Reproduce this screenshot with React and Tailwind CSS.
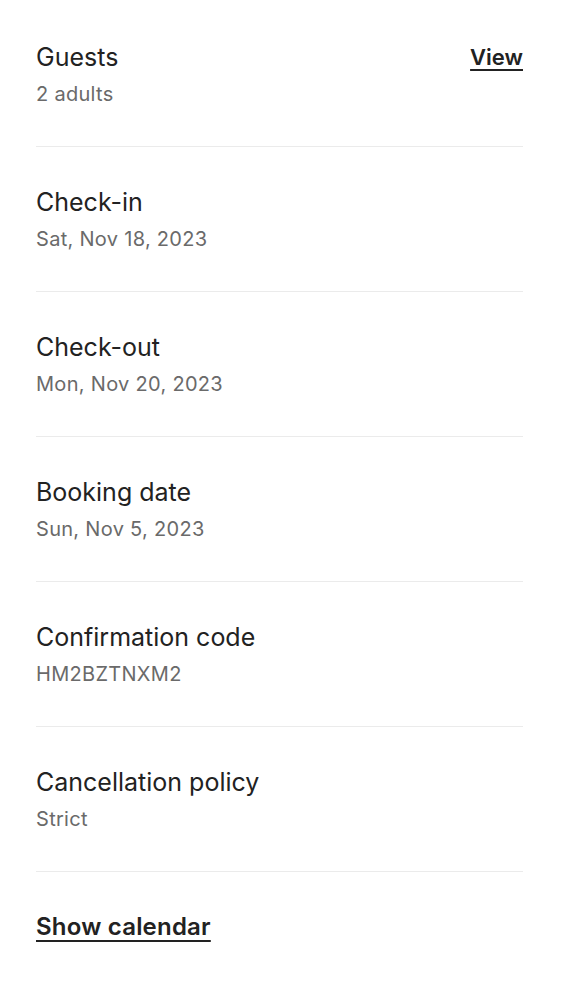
import React from "react";

const details = [
	{ label: "Guests", value: "2 adults", action: "View" },
	{ label: "Check-in", value: "Sat, Nov 18, 2023" },
	{ label: "Check-out", value: "Mon, Nov 20, 2023" },
	{ label: "Booking date", value: "Sun, Nov 5, 2023" },
	{ label: "Confirmation code", value: "HM2BZTNXM2" },
	{ label: "Cancellation policy", value: "Strict" },
];

const DetailRow = ({ label, value, action }) => (
	<div className="flex items-start justify-between border-b border-[#ebebeb] pt-[40px] pb-[39px] first:pt-[42px]">
		<div>
			<div className="text-[25px] leading-[30px] text-[#222222]">{label}</div>
			<div className="mt-[9px] text-[20px] leading-[26px] tracking-[0.3px] text-[#6a6a6a]">{value}</div>
		</div>
		{action && (
			<button className="pt-[2px] text-[22px] leading-[26px] font-semibold text-[#222222] underline underline-offset-[4px] decoration-2">
				{action}
			</button>
		)}
	</div>
);

export default function App() {
	return (
		<div
			className="min-h-screen bg-white pl-[36px] pr-[39px] pb-[40px]"
			style={{ fontFamily: "Inter, 'Noto Sans', sans-serif" }}
		>
			{details.map((d) => (
				<DetailRow key={d.label} {...d} />
			))}
			<div className="pt-[40px]">
				<button className="text-[24px] leading-[30px] font-semibold tracking-[0.2px] text-[#222222] underline underline-offset-[5px] decoration-2">
					Show calendar
				</button>
			</div>
		</div>
	);
}
